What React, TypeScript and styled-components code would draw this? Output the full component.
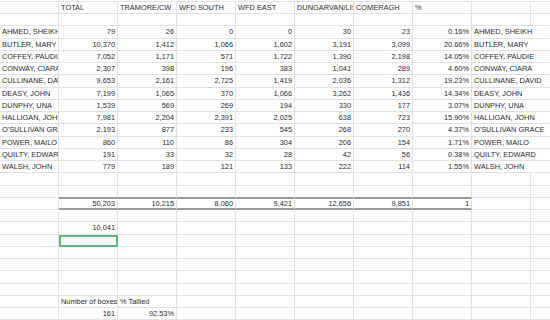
import styled, { createGlobalStyle } from "styled-components";

const GlobalStyle = createGlobalStyle`
  html, body {
    margin: 0;
    padding: 0;
    background: #fff;
    overflow: hidden;
  }
  body {
    font-family: "Liberation Sans", Arial, sans-serif;
  }
`;

const Sheet = styled.div`
  width: 550px;
  height: 320px;
  overflow: hidden;
  padding-top: 1.75px;
  box-sizing: border-box;
`;

const Row = styled.div<{ $top?: boolean }>`
  display: grid;
  grid-template-columns: repeat(10, 59px);
  height: 12.25px;
  ${(p) => (p.$top ? "border-top: 1px solid #e2e2e2; margin-top: -1px;" : "")}
`;

const Cell = styled.div<{
  $align?: "left" | "right";
  $spill?: boolean;
  $noRight?: boolean;
  $total?: boolean;
  $selected?: boolean;
}>`
  position: relative;
  box-sizing: border-box;
  height: 12.25px;
  padding: 0 2px;
  font-size: 7.4px;
  line-height: 11.25px;
  color: #2b2b2b;
  white-space: nowrap;
  text-align: ${(p) => p.$align || "left"};
  overflow: ${(p) => (p.$spill ? "visible" : "hidden")};
  border-bottom: 1px solid #e2e2e2;
  border-right: ${(p) => (p.$noRight ? "none" : "1px solid #e2e2e2")};
  ${(p) =>
    p.$total &&
    `
    border-top: 2px solid #9a9a9a;
    border-bottom: 2px solid #9a9a9a;
    margin-top: -1px;
    height: 13.25px;
    line-height: 9.25px;
  `}
  ${(p) =>
    p.$selected &&
    `
    outline: 2px solid #5cb87d;
    outline-offset: -2px;
  `}
`;

const people: [string, string[]][] = [
  ["AHMED, SHEIKH", ["79", "26", "0", "0", "30", "23", "0.16%"]],
  ["BUTLER, MARY", ["10,370", "1,412", "1,066", "1,602", "3,191", "3,099", "20.66%"]],
  ["COFFEY, PAUDIE", ["7,052", "1,171", "571", "1,722", "1,390", "2,198", "14.05%"]],
  ["CONWAY, CIARA", ["2,307", "398", "196", "383", "1,041", "289", "4.60%"]],
  ["CULLINANE, DAVID", ["9,653", "2,161", "2,725", "1,419", "2,036", "1,312", "19.23%"]],
  ["DEASY, JOHN", ["7,199", "1,065", "370", "1,066", "3,262", "1,436", "14.34%"]],
  ["DUNPHY, UNA", ["1,539", "569", "269", "194", "330", "177", "3.07%"]],
  ["HALLIGAN, JOHN", ["7,981", "2,204", "2,391", "2,025", "638", "723", "15.90%"]],
  ["O'SULLIVAN GRACE", ["2,193", "877", "233", "545", "268", "270", "4.37%"]],
  ["POWER, MAILO", ["860", "110", "86", "304", "206", "154", "1.71%"]],
  ["QUILTY, EDWARD", ["191", "33", "32", "28", "42", "56", "0.38%"]],
  ["WALSH, JOHN", ["779", "189", "121", "133", "222", "114", "1.55%"]],
];

const headers = ["", "TOTAL", "TRAMORE/CW", "WFD SOUTH", "WFD EAST", "DUNGARVAN/LISMORE", "COMERAGH", "%", "", ""];
const totals = ["", "50,203", "10,215", "8,060", "9,421", "12,656", "9,851", "1", "", ""];

const blank = () => Array(10).fill("");
const isNumber = (v: string) => /^[\d.,%]+$/.test(v);

function PlainRow({ values }: { values: string[] }) {
  return (
    <Row>
      {values.map((v, i) => (
        <Cell key={i} $align={isNumber(v) ? "right" : "left"}>
          {v}
        </Cell>
      ))}
    </Row>
  );
}

export default function App() {
  const row10041 = blank();
  row10041[1] = "10,041";
  const labels = blank();
  labels[1] = "Number of boxes";
  labels[2] = "% Tallied";
  const counts = blank();
  counts[1] = "161";
  counts[2] = "92.53%";

  return (
    <>
      <GlobalStyle />
      <Sheet>
        <Row $top>
          {headers.map((h, i) => (
            <Cell key={i}>{h}</Cell>
          ))}
        </Row>
        <PlainRow values={blank()} />
        {people.map(([name, nums]) => (
          <Row key={name}>
            <Cell>{name}</Cell>
            {nums.map((n, i) => (
              <Cell key={i} $align="right">
                {n}
              </Cell>
            ))}
            <Cell $spill $noRight>
              {name}
            </Cell>
            <Cell />
          </Row>
        ))}
        <PlainRow values={blank()} />
        <PlainRow values={blank()} />
        <Row>
          {totals.map((v, i) => (
            <Cell key={i} $align="right" $total={i >= 1 && i <= 7}>
              {v}
            </Cell>
          ))}
        </Row>
        <PlainRow values={blank()} />
        <PlainRow values={row10041} />
        <Row>
          {blank().map((_, i) => (
            <Cell key={i} $selected={i === 1} />
          ))}
        </Row>
        <PlainRow values={blank()} />
        <PlainRow values={blank()} />
        <PlainRow values={blank()} />
        <PlainRow values={blank()} />
        <PlainRow values={labels} />
        <PlainRow values={counts} />
      </Sheet>
    </>
  );
}
